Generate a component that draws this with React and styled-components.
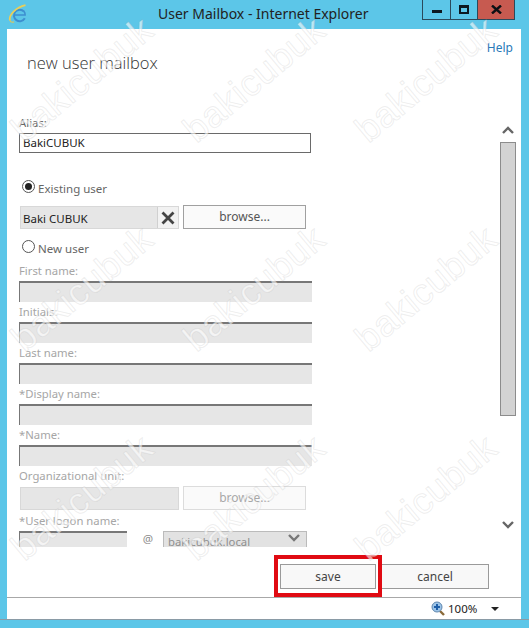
import React from 'react';
import styled, { createGlobalStyle } from 'styled-components';

const GlobalStyle = createGlobalStyle`
html, body { margin: 0; padding: 0; background: #5cc6e8; }
* { box-sizing: border-box; }
`;

const Window = styled.div`
position: relative;
width: 529px;
height: 628px;
overflow: hidden;
display: flex;
flex-direction: column;
background: #5cc6e8;
font-family: "Noto Sans", "Open Sans", sans-serif;
font-size: 11.5px;
color: #333;
`;
const TitleBar = styled.div`
height: 29px;
flex: none;
display: flex;
align-items: flex-start;
padding-left: 8px;
`;
const LogoBox = styled.div`
width: 20px;
height: 22px;
margin-top: 4px;
`;
const Title = styled.div`
margin-left: 130px;
margin-top: 3px;
font-size: 14px;
line-height: 22px;
color: #222;
`;
const Controls = styled.div`
margin-left: auto;
margin-right: 14px;
display: flex;
height: 20px;
border: 1px solid #2a4a5c;
border-top: none;
`;
const ControlButton = styled.div`
width: ${p => p.$w}px;
display: flex;
align-items: center;
justify-content: center;
background: ${p => p.$close ? '#c75a50' : 'transparent'};
border-left: ${p => p.$first ? 'none' : '1px solid #2a4a5c'};
`;
const MinGlyph = styled.div`
width: 10px;
height: 3px;
margin-top: 4px;
background: #0c1820;
`;
const MaxGlyph = styled.div`
width: 10px;
height: 9px;
border: 2px solid #0c1820;
border-top-width: 3px;
`;
const Body = styled.div`
flex: none;
height: 568px;
margin: 0 8px 0 7px;
display: flex;
flex-direction: column;
background: #fff;
`;
const Header = styled.div`
height: 84px;
flex: none;
display: flex;
justify-content: space-between;
align-items: flex-start;
padding: 11px 8px 0 20px;
`;
const Heading = styled.h1`
margin: 12px 0 0;
font-family: "Open Sans", sans-serif;
font-size: 16.5px;
line-height: 22px;
font-weight: 300;
color: #333;
`;
const HelpLink = styled.a`
font-size: 12px;
line-height: 16px;
color: #2a7ab8;
`;
const ScrollRow = styled.div`
height: 434px;
flex: none;
display: flex;
overflow: hidden;
`;
const Form = styled.div`
flex: 1;
padding-left: 12px;
display: flex;
flex-direction: column;
overflow: hidden;
`;
const Label = styled.div`
height: 18px;
line-height: 20px;
font-size: 11.3px;
margin-bottom: 2px;
flex: none;
color: ${p => p.$off ? '#a6a6a6' : '#666'};
`;
const TextField = styled.div`
width: 292px;
height: 20px;
flex: none;
padding-left: 3px;
line-height: 18px;
color: #222;
border: 1px solid #6a6a6a;
`;
const RadioRow = styled.div`
display: flex;
align-items: center;
gap: 3px;
height: 18px;
flex: none;
padding-left: 3px;
margin-top: ${p => p.$top}px;
margin-bottom: ${p => p.$bottom}px;
color: #666;
`;
const RadioDot = styled.div`
width: 13px;
height: 13px;
margin-top: -3px;
border-radius: 50%;
border: 1px solid #555;
background: #fff;
display: flex;
align-items: center;
justify-content: center;
&::after {
    content: "";
    display: ${p => p.$on ? 'block' : 'none'};
    width: 7px;
    height: 7px;
    border-radius: 50%;
    background: #222;
}
`;
const PickerRow = styled.div`
display: flex;
align-items: flex-start;
gap: 4px;
flex: none;
margin-top: ${p => p.$top}px;
margin-bottom: ${p => p.$bottom}px;
`;
const Picker = styled.div`
width: 159px;
height: 23px;
margin: 1px 0 0 1px;
display: flex;
align-items: center;
background: #e6e6e6;
border: 1px solid #d8d8d8;
`;
const PickerName = styled.div`
flex: 1;
padding: 2px 0 0 2px;
color: #222;
`;
const ClearBox = styled.div`
width: 21px;
height: 100%;
display: flex;
align-items: center;
justify-content: center;
background: #f2f2f2;
border-left: 1px solid #d0d0d0;
`;
const BrowseButton = styled.div`
width: 123px;
height: 24px;
display: flex;
align-items: center;
justify-content: center;
padding-bottom: 1px;
background: #fafafa;
border: 1px solid ${p => p.$off ? '#dcdcdc' : '#a0a0a0'};
color: ${p => p.$off ? '#a8a8a8' : '#555'};
font-size: 12px;
`;
const DisabledField = styled.div`
width: ${p => p.$w || 293}px;
height: 21px;
flex: none;
background: #e6e6e6;
border-top: 2px solid #777;
border-left: 1px solid #777;
`;
const LogonRow = styled.div`
display: flex;
align-items: flex-start;
flex: none;
height: 16px;
`;
const AtSign = styled.div`
width: 36px;
padding-left: 6px;
line-height: 16px;
text-align: center;
font-size: 11.5px;
color: #8c8c8c;
`;
const DomainSelect = styled.div`
width: 144px;
height: 24px;
display: flex;
justify-content: space-between;
padding: 2px 6px 0 4px;
background: #e2e2e2;
border: 1px solid #bbb;
color: #8f8f8f;
font-size: 11.3px;
`;
const ScrollBar = styled.div`
width: 16px;
flex: none;
margin-right: 5px;
padding-top: 13px;
display: flex;
flex-direction: column;
align-items: center;
`;
const Thumb = styled.div`
width: 16px;
height: 274px;
margin-top: 8px;
flex: none;
background: #d3d3d3;
border: 1px solid #8c8c8c;
`;
const ScrollDown = styled.div`
height: 113px;
flex: none;
display: flex;
align-items: flex-end;
`;
const Footer = styled.div`
height: 50px;
flex: none;
display: flex;
justify-content: flex-end;
align-items: flex-start;
gap: 5px;
padding: 17px 32px 0 0;
`;
const SaveWrap = styled.div`
position: relative;
`;
const FooterButton = styled.div`
width: ${p => p.$w}px;
height: 25px;
display: flex;
align-items: center;
justify-content: center;
background: #f8f8f8;
border: 1px solid #9a9a9a;
color: #444;
font-size: 12px;
`;
const RedBox = styled.div`
position: absolute;
top: -9px;
left: -6px;
right: -6px;
bottom: -8px;
border: 4px solid #e00a12;
`;
const StatusBar = styled.div`
height: 22px;
flex: none;
margin: 0 8px 0 7px;
display: flex;
align-items: center;
background: #fff;
border-top: 1px solid #a8a8a8;
padding-left: 424px;
`;
const ZoomText = styled.div`
margin-left: 3px;
font-size: 11.5px;
color: #222;
`;
const DropArrow = styled.div`
margin-left: 14px;
width: 0;
height: 0;
border-left: 4px solid transparent;
border-right: 4px solid transparent;
border-top: 4px solid #222;
`;
const BottomEdge = styled.div`
flex: 1;
border-top: 1px solid #8a9ba6;
`;
const MarkLayer = styled.div`
position: absolute;
top: -25px;
left: -4px;
display: grid;
grid-template-columns: repeat(3, 172px);
grid-auto-rows: 209px;
pointer-events: none;
`;
const Mark = styled.div`
display: flex;
align-items: center;
justify-content: center;
font-family: "Liberation Sans", sans-serif;
font-size: 37px;
letter-spacing: 0.5px;
transform: rotate(-40deg);
color: rgba(255, 255, 255, 0.6);
-webkit-text-stroke: 1px rgba(170, 170, 170, 0.2);
`;

const IeLogo = () => (
    <svg width="20" height="22" viewBox="0 0 20 22" fill="none">
        <path d="M16 7.5a5.8 5.8 0 1 0 .8 6.8" stroke="#3d8fd0" strokeWidth="2" />
        <path d="M6.5 11h10.6c.1-1.6-.5-3-1.2-3.8" stroke="#3d8fd0" strokeWidth="1.6" />
        <path d="M2 16.5C.4 11 8 3.5 17.5 1.2" stroke="#e8cf5a" strokeWidth="1.8" />
        <path d="M2 16.5c.6 1.6 2.4 2 4 1.4" stroke="#d8c860" strokeWidth="1.2" />
    </svg>
);
const CloseGlyph = () => (
    <svg width="11" height="9" viewBox="0 0 11 9">
        <path d="M1 .5 10 8.5M10 .5 1 8.5" stroke="#0c1014" strokeWidth="2.4" />
    </svg>
);
const ClearGlyph = () => (
    <svg width="14" height="14" viewBox="0 0 14 14">
        <path d="M1.5 1.5 12.5 12.5M12.5 1.5 1.5 12.5" stroke="#444" strokeWidth="2.8" />
    </svg>
);
const Chevron = ({ up, color = '#666' }) => (
    <svg width="12" height="8" viewBox="0 0 12 8">
        <path d={up ? 'M1 7 6 2l5 5' : 'M1 1l5 5 5-5'} stroke={color} strokeWidth="2.4" fill="none" />
    </svg>
);
const ZoomGlyph = () => (
    <svg width="14" height="15" viewBox="0 0 14 15">
        <path d="M9 10l4 4" stroke="#8a6a3a" strokeWidth="2.4" />
        <circle cx="6" cy="6" r="5" fill="#9cc4e8" stroke="#5f86ad" />
        <path d="M3 6h6M6 3v6" stroke="#1f5fa8" strokeWidth="2" />
    </svg>
);

const fields = ['First name:', 'Initials:', 'Last name:', '*Display name:', '*Name:'];

const App = () => {
    const marks = Array.from({ length: 9 }, (_, i) => i);
    return (
        <Window>
            <GlobalStyle />
            <TitleBar>
                <LogoBox><IeLogo /></LogoBox>
                <Title>User Mailbox - Internet Explorer</Title>
                <Controls>
                    <ControlButton $w={27} $first><MinGlyph /></ControlButton>
                    <ControlButton $w={27}><MaxGlyph /></ControlButton>
                    <ControlButton $w={37} $close><CloseGlyph /></ControlButton>
                </Controls>
            </TitleBar>
            <Body>
                <Header>
                    <Heading>new user mailbox</Heading>
                    <HelpLink>Help</HelpLink>
                </Header>
                <ScrollRow>
                    <Form>
                        <Label>Alias:</Label>
                        <TextField>BakiCUBUK</TextField>
                        <RadioRow $top={26}><RadioDot $on />Existing user</RadioRow>
                        <PickerRow $top={8}>
                            <Picker>
                                <PickerName>Baki CUBUK</PickerName>
                                <ClearBox><ClearGlyph /></ClearBox>
                            </Picker>
                            <BrowseButton>browse...</BrowseButton>
                        </PickerRow>
                        <RadioRow $top={10} $bottom={4}><RadioDot />New user</RadioRow>
                        {fields.map(f => (
                            <React.Fragment key={f}>
                                <Label $off>{f}</Label>
                                <DisabledField />
                            </React.Fragment>
                        ))}
                        <Label $off>Organizational unit:</Label>
                        <PickerRow $bottom={1}>
                            <Picker />
                            <BrowseButton $off>browse...</BrowseButton>
                        </PickerRow>
                        <Label $off>*User logon name:</Label>
                        <LogonRow>
                            <DisabledField $w={108} />
                            <AtSign>@</AtSign>
                            <DomainSelect>bakicubuk.local<Chevron color="#777" /></DomainSelect>
                        </LogonRow>
                    </Form>
                    <ScrollBar>
                        <Chevron up />
                        <Thumb />
                        <ScrollDown><Chevron /></ScrollDown>
                    </ScrollBar>
                </ScrollRow>
                <Footer>
                    <SaveWrap>
                        <FooterButton $w={96}>save</FooterButton>
                        <RedBox />
                    </SaveWrap>
                    <FooterButton $w={108}>cancel</FooterButton>
                </Footer>
            </Body>
            <StatusBar>
                <ZoomGlyph />
                <ZoomText>100%</ZoomText>
                <DropArrow />
            </StatusBar>
            <BottomEdge />
            <MarkLayer>
                {marks.map(i => <Mark key={i}>bakicubuk</Mark>)}
            </MarkLayer>
        </Window>
    );
};

export default App;
